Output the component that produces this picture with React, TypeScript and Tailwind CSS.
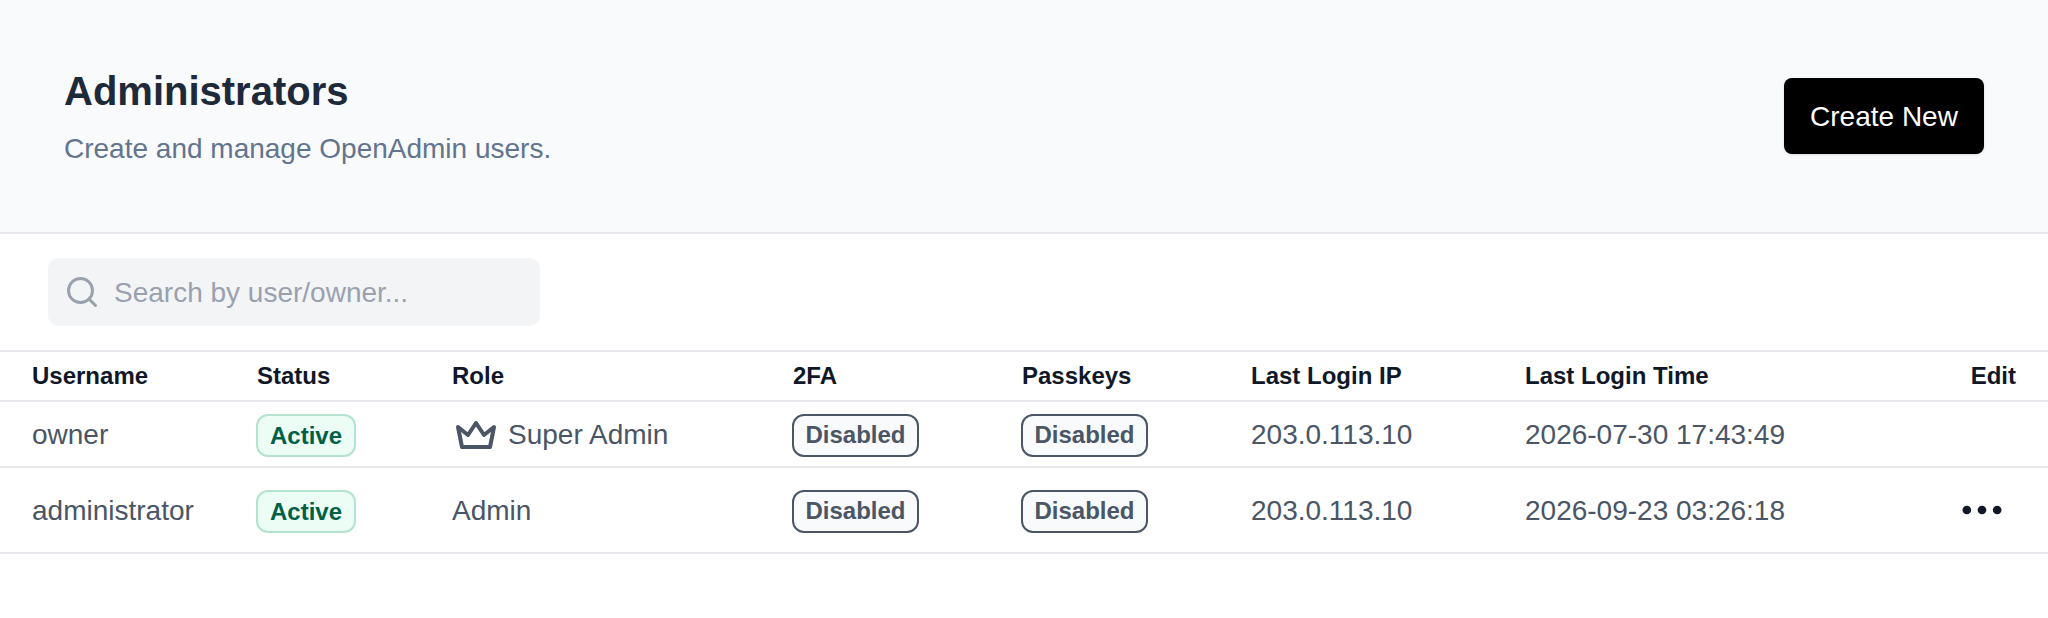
import { Ellipsis, Search } from 'lucide-react';
import { TbCrown } from 'react-icons/tb';

const users = [
	{
		username: 'owner',
		role: 'Super Admin',
		ip: '203.0.113.10',
		time: '2026-07-30 17:43:49',
		owner: true,
	},
	{
		username: 'administrator',
		role: 'Admin',
		ip: '203.0.113.10',
		time: '2026-09-23 03:26:18',
		owner: false,
	},
];

function DisabledBadge() {
	return (
		<span className="-ml-px inline-flex h-[43px] w-[127px] items-center justify-center rounded-[12px] border-2 border-gray-600 bg-slate-50 text-[24px] font-bold text-gray-600">
			Disabled
		</span>
	);
}

export default function App() {
	return (
		<div className="min-h-[618px] bg-white font-['Liberation_Sans',Arial,sans-serif]">
			<header className="flex h-[234px] items-center justify-between border-b-2 border-gray-200 bg-gray-50 px-16">
				<div className="pb-[1px]">
					<h1 className="text-[40px] leading-[56px] font-bold text-gray-800">
						Administrators
					</h1>
					<p className="mt-[10px] text-[28px] leading-[40px] text-slate-500">
						Create and manage OpenAdmin users.
					</p>
				</div>
				<button className="h-[76px] w-[200px] rounded-lg bg-black pt-[2px] text-[28px] text-white shadow-sm">
					Create New
				</button>
			</header>

			<div className="py-6 pl-12">
				<label className="flex h-[68px] w-[492px] items-center gap-[14px] rounded-[10px] bg-gray-100 pl-4">
					<Search size={36} strokeWidth={2} className="shrink-0 text-gray-400" />
					<input
						className="w-full bg-transparent pt-[2px] text-[28px] outline-none placeholder:text-gray-400"
						placeholder="Search by user/owner..."
					/>
				</label>
			</div>

			<table className="w-full table-fixed border-collapse border-y-2 border-gray-200">
				<thead>
					<tr className="h-[50px] border-b-2 border-gray-200 text-left text-[24px] font-bold text-gray-900">
						<th className="w-[225px] pl-8">Username</th>
						<th className="w-[195px] pl-8">Status</th>
						<th className="w-[341px] pl-8">Role</th>
						<th className="w-[229px] pl-8">2FA</th>
						<th className="w-[229px] pl-8">Passkeys</th>
						<th className="w-[274px] pl-8">Last Login IP</th>
						<th className="w-[332px] pl-8">Last Login Time</th>
						<th className="pr-8 text-right">Edit</th>
					</tr>
				</thead>
				<tbody className="text-[28px] text-gray-600">
					{users.map((u) => (
						<tr
							key={u.username}
							className={`border-b-2 border-gray-200 ${u.owner ? 'h-[66px]' : 'h-[86px]'}`}
						>
							<td className="pt-[2px] pl-8">{u.username}</td>
							<td className="pt-[2px] pl-8">
								<span className="-ml-px mt-[1px] inline-flex h-[43px] w-[100px] items-center justify-center rounded-[12px] border-2 border-[#b3e3cf] bg-emerald-50 align-middle text-[24px] font-bold text-emerald-800">
									Active
								</span>
							</td>
							<td className="pt-[2px] pl-8">
								{u.owner ? (
									<span className="flex items-center gap-[8px]">
										<TbCrown size={48} className="-mt-px shrink-0" />
										{u.role}
									</span>
								) : (
									u.role
								)}
							</td>
							<td className="pt-[2px] pl-8">
								<DisabledBadge />
							</td>
							<td className="pt-[2px] pl-8">
								<DisabledBadge />
							</td>
							<td className="pt-[2px] pl-8">{u.ip}</td>
							<td className="pt-[2px] pl-8">{u.time}</td>
							<td className="pr-[40px]">
								{!u.owner && (
									<button className="float-right flex text-gray-900">
										<Ellipsis size={52} />
									</button>
								)}
							</td>
						</tr>
					))}
				</tbody>
			</table>
		</div>
	);
}
